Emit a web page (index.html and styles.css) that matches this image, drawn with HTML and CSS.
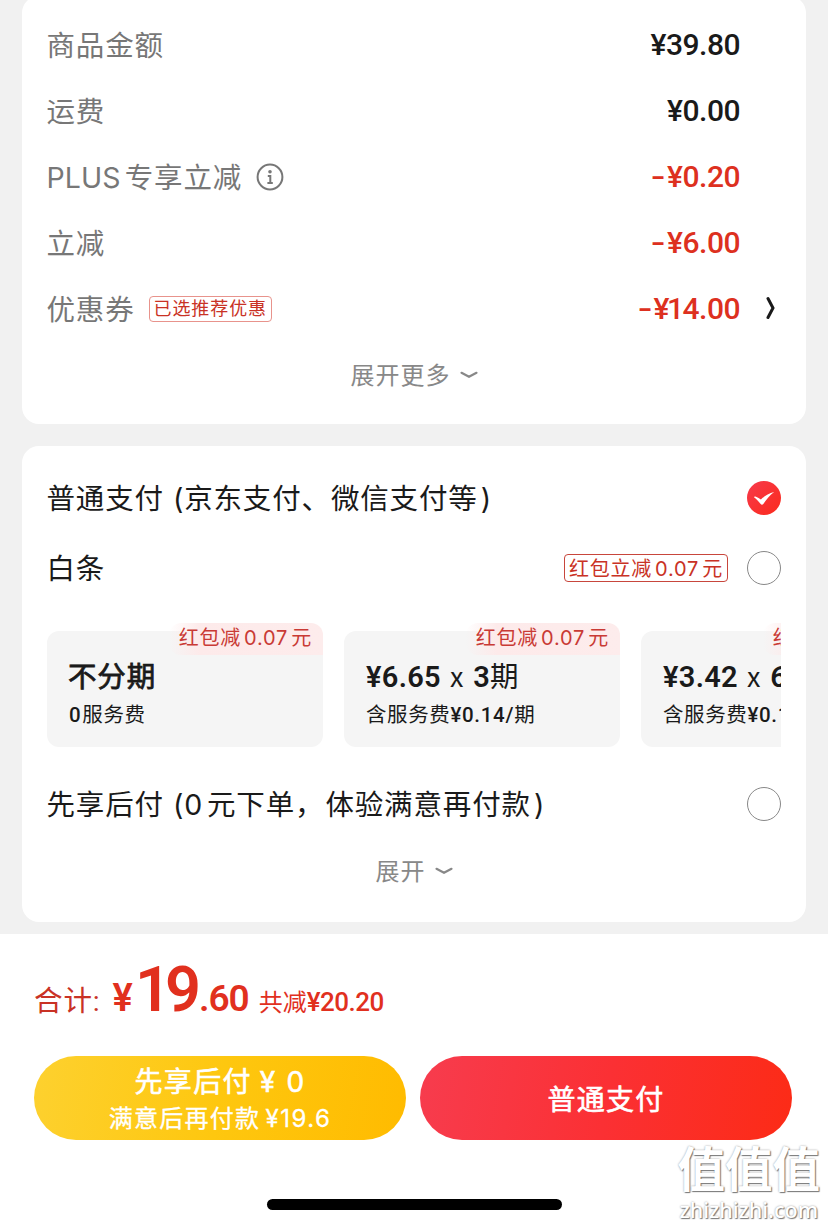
FILE: index.html
```html
<!DOCTYPE html>
<html lang="zh-CN">
<head>
    <meta charset="UTF-8">
    <title>确认订单</title>
    <link rel="stylesheet" href="styles.css">
</head>
<body>
    <main>
        <!-- price details -->
        <section class="card summary">
            <div class="row">
                <span class="label">商品金额</span>
                <span class="price">¥39.80</span>
            </div>
            <div class="row">
                <span class="label">运费</span>
                <span class="price">¥0.00</span>
            </div>
            <div class="row">
                <span class="label"><span class="plus">PLUS</span>专享立减</span>
                <svg class="info" viewBox="0 0 28 28" fill="none" stroke="#777" stroke-width="2">
                    <circle cx="14" cy="14" r="12.4"/>
                    <circle cx="14" cy="8.8" r="1.8" fill="#777" stroke="none"/>
                    <path d="M11.8 12.9h2.5v6.9M11.4 20h5.4"/>
                </svg>
                <span class="price red"><span class="minus">-</span>¥0.20</span>
            </div>
            <div class="row">
                <span class="label">立减</span>
                <span class="price red"><span class="minus">-</span>¥6.00</span>
            </div>
            <div class="row">
                <span class="label">优惠券</span>
                <span class="tag">已选推荐优惠</span>
                <span class="price red"><span class="minus">-</span>¥<span class="one">1</span>4.00</span>
                <svg class="arrow" viewBox="0 0 12 24" fill="none" stroke="#1a1a1a" stroke-width="3">
                    <path d="M2 2.500l5 9.500-5 9.500" stroke-linecap="round"/>
                </svg>
            </div>
            <div class="more">
                <span>展开更多</span>
                <svg class="down" viewBox="0 0 18 8" fill="none" stroke="#888" stroke-width="2.2">
                    <path d="M1.5 1.8L9 5.8l7.5-4" stroke-linecap="round" stroke-linejoin="round"/>
                </svg>
            </div>
        </section>

        <!-- payment methods -->
        <section class="card pay">
            <div class="method">
                <span class="name">普通支付<span class="open">(</span>京东支付、微信支付等<span class="close">)</span></span>
                <svg class="radio" viewBox="0 0 34 34">
                    <defs>
                        <linearGradient id="dot" x1="0" y1="0" x2="1" y2="1">
                            <stop offset="0" stop-color="#f73a4b"/>
                            <stop offset="1" stop-color="#fb2a1c"/>
                        </linearGradient>
                    </defs>
                    <circle cx="17" cy="17" r="17" fill="url(#dot)"/>
                    <path d="M7 16.200c0-.8 1.200-.7 2-.4 1.800.6 3.500 1.600 4.900 2.700 3.700-3.600 8.200-6.500 13.300-7.600-4.300 3.300-7.900 7.400-10.900 12.100-.7 1-1.900 1-2.600.1-2-2.600-4-5-6.700-6.900z" fill="#fff"/>
                </svg>
            </div>
            <div class="method">
                <span class="name">白条</span>
                <span class="tag tag-big">红包立减<span class="num">0.07</span>元</span>
                <span class="radio empty"></span>
            </div>
            <div class="plans">
                <div class="plan">
                    <span class="badge">红包减<span class="num">0.07</span>元</span>
                    <div class="plan-title"><b>不分期</b></div>
                    <div class="plan-fee"><i>0</i><span class="gap"></span>服务费</div>
                </div>
                <div class="plan">
                    <span class="badge">红包减<span class="num">0.07</span>元</span>
                    <div class="plan-title"><i>¥6.65</i><em>x</em><i>3</i>期</div>
                    <div class="plan-fee">含服务费<i>¥0.14/</i>期</div>
                </div>
                <div class="plan">
                    <span class="badge">红包减<span class="num">0.07</span>元</span>
                    <div class="plan-title"><i>¥3.42</i><em>x</em><i>6</i></div>
                    <div class="plan-fee">含服务费<i>¥0.1</i></div>
                </div>
            </div>
            <div class="method later">
                <span class="name">先享后付<span class="open">(</span><span class="zero">0</span>元下单<span class="comma">，</span>体验满意再付款<span class="close">)</span></span>
                <span class="radio empty"></span>
            </div>
            <div class="more">
                <span>展开</span>
                <svg class="down" viewBox="0 0 18 8" fill="none" stroke="#888" stroke-width="2.2">
                    <path d="M1.5 1.8L9 5.8l7.5-4" stroke-linecap="round" stroke-linejoin="round"/>
                </svg>
            </div>
        </section>
    </main>

    <footer>
        <div class="total">
            <span class="total-label">合计:</span>
            <span class="yen">¥</span>
            <span class="big">19</span>
            <span class="cents">.60</span>
            <span class="saved">共减<i>¥20.20</i></span>
        </div>
        <div class="buttons">
            <button class="btn yellow">
                <span class="line1">先享后付<span class="yuan">¥</span>0</span>
                <span class="line2">满意后再付款<span class="amount">¥19.6</span></span>
            </button>
            <button class="btn primary">普通支付</button>
        </div>
        <div class="home-bar"></div>
        <div class="watermark">
            <div class="mark-cn">值值值</div>
            <div class="mark-en">zhizhizhi.com</div>
        </div>
    </footer>
</body>
</html>
```
FILE: styles.css
```css
* {
    box-sizing: border-box;
}

body {
    margin: 0;
    width: 828px;
    height: 1227px;
    overflow: hidden;
    background-color: #f1f1f1;
    color: #1a1a1a;
    font-family: Inter, "Noto Sans CJK SC", sans-serif;
    font-size: 28.5px;
    letter-spacing: 0.85px;
}

i, em {
    font-style: normal;
}

main {
    height: 934px;
    padding: 0 22px;
    overflow: hidden;
}

.card {
    background-color: white;
    border-radius: 17px;
}

.summary {
    height: 428px;
    margin-top: -4px;
    padding: 16px 25px 0;
}

.row {
    display: flex;
    align-items: center;
    height: 66px;
    padding-right: 41px;
    white-space: nowrap;
}

.label, .name {
    margin-left: -0.5px;
    padding-bottom: 4px;
}

.label {
    color: #777;
}

.plus {
    letter-spacing: 0.1px;
    margin-right: 4px;
}

.info {
    width: 28px;
    height: 28px;
    margin-left: 14px;
}

.price {
    margin-left: auto;
    padding-bottom: 1px;
    font-family: Roboto, sans-serif;
    font-weight: 500;
    font-size: 30px;
    letter-spacing: -0.5px;
}

.minus {
    display: inline-block;
    margin-right: 4px;
    transform: scaleX(1.4);
}

.one {
    margin: 0 -1px 0 -2px;
}

.red {
    color: #dd3020;
}

.tag {
    height: 26px;
    margin-left: 14px;
    padding: 0 4px;
    border: 1px solid #e8938c;
    border-radius: 4px;
    color: #c93225;
    font-size: 18px;
    line-height: 23px;
    letter-spacing: 0.9px;
}

.arrow {
    width: 12px;
    height: 24px;
    margin: 0 -38px 2px 26px;
}

.more {
    display: flex;
    align-items: center;
    justify-content: center;
    gap: 9px;
    height: 66px;
    color: #888;
    font-size: 24px;
    letter-spacing: 1px;
}

.more span {
    padding-bottom: 4px;
}

.down {
    width: 18px;
    height: 8px;
}

.pay {
    height: 476px;
    margin-top: 22px;
    padding: 17px 25px 0;
}

.method {
    display: flex;
    align-items: center;
    height: 70px;
    white-space: nowrap;
}

.open {
    margin: 0 0 0 9px;
}

.close {
    margin-left: 3px;
}

.zero {
    margin-right: 4px;
}

.comma {
    margin-right: 1px;
}

.radio {
    width: 34px;
    height: 34px;
    margin-left: auto;
}

.empty {
    border: 1.5px solid #888;
    border-radius: 50%;
}

.tag-big {
    height: 28px;
    margin-left: auto;
    border-color: #c8463c;
    font-size: 20px;
    line-height: 28px;
    letter-spacing: 0.8px;
}

.tag-big + .radio {
    margin-left: 19px;
}

.num {
    margin: 0 3px;
}

.plans {
    display: flex;
    gap: 21px;
    height: 144px;
    padding-top: 28px;
    overflow: hidden;
}

.plan {
    position: relative;
    flex: 0 0 276px;
    height: 116px;
    padding: 24px 22px 0;
    background-color: #f5f5f5;
    border-radius: 12px;
    white-space: nowrap;
}

.badge {
    position: absolute;
    top: -8px;
    right: 0;
    height: 32px;
    padding: 0 11px 0 10px;
    background: linear-gradient(to right, rgba(253, 230, 229, 0), #fdeaea 20%, #fdecec);
    border-radius: 12px 12px 0 12px;
    color: #c93a35;
    font-size: 20px;
    line-height: 31px;
    letter-spacing: 0.8px;
}

.plan-title {
    height: 42px;
    line-height: 41px;
}

.plan-title b {
    display: block;
    margin-left: -1px;
    font-size: 28.5px;
    font-weight: 400;
    line-height: 43px;
    -webkit-text-stroke: 0.8px #1a1a1a;
}

.plan-title i {
    font-family: Roboto, sans-serif;
    font-weight: 600;
    font-size: 29px;
    letter-spacing: 0.3px;
}

.plan-title em {
    margin: 0 9px;
    font-family: "Noto Sans CJK SC", sans-serif;
    font-size: 27px;
}

.plan-fee {
    height: 34px;
    font-size: 20.5px;
    line-height: 35px;
    letter-spacing: 0.6px;
}

.plan-fee i {
    font-family: Roboto, sans-serif;
    font-weight: 500;
    letter-spacing: 0.7px;
}

.gap {
    margin-left: 1px;
}

.later {
    height: 68px;
    margin-top: 23px;
}

footer {
    position: relative;
    height: 293px;
    padding: 0 34px;
    background-color: white;
}

.total {
    display: flex;
    align-items: baseline;
    height: 122px;
    padding-top: 18px;
    color: #e1301e;
    font-family: Roboto, "Noto Sans CJK SC", sans-serif;
    font-weight: 600;
    line-height: 76px;
    letter-spacing: 0;
    white-space: nowrap;
}

.total-label {
    font-weight: 400;
    color: #c93225;
    letter-spacing: 0.9px;
}

.yen {
    margin-left: 12px;
    font-size: 38px;
}

.big {
    margin-left: 2px;
    font-size: 63px;
    letter-spacing: -6px;
}

.cents {
    margin-left: 4px;
    font-size: 37px;
    letter-spacing: -1px;
}

.saved {
    margin-left: 10px;
    font-size: 24px;
    font-weight: 400;
}

.saved i {
    font-weight: 500;
    font-size: 26px;
    letter-spacing: -0.5px;
}

.buttons {
    display: flex;
    gap: 14px;
}

.btn {
    display: flex;
    flex-direction: column;
    align-items: center;
    justify-content: center;
    width: 372px;
    height: 84px;
    padding: 0;
    border: 0;
    border-radius: 42px;
    color: white;
    font-family: inherit;
    font-size: 28px;
    font-weight: 400;
    letter-spacing: 1.3px;
    -webkit-text-stroke: 0.6px white;
}

.yellow {
    padding-top: 4px;
    background: linear-gradient(100deg, #fdd12f, #fec70f 50%, #ffbb00);
}

.primary {
    background: linear-gradient(100deg, #f73c4e, #fb3034 50%, #fc2b16);
}

.line1 {
    line-height: 38px;
}

.line2 {
    font-size: 24px;
    line-height: 36px;
    letter-spacing: 1.3px;
    -webkit-text-stroke: 0.3px white;
}

.yuan {
    margin: 0 10px 0 8px;
}

.amount {
    margin-left: 5px;
    letter-spacing: 1.5px;
}

.home-bar {
    width: 295px;
    height: 11px;
    margin: 59px 0 0 233px;
    background-color: black;
    border-radius: 6px;
}

.watermark {
    position: absolute;
    top: 209px;
    right: 8px;
    color: white;
    text-align: center;
    text-shadow: 1px 1px 1px #777, 0 0 2px #999;
}

.mark-cn {
    font-size: 47.5px;
    font-weight: 700;
    line-height: 54px;
    letter-spacing: 0;
}

.mark-en {
    font-family: "Noto Sans", sans-serif;
    font-size: 21.5px;
    font-weight: 500;
    line-height: 26px;
    letter-spacing: 0;
}
```
